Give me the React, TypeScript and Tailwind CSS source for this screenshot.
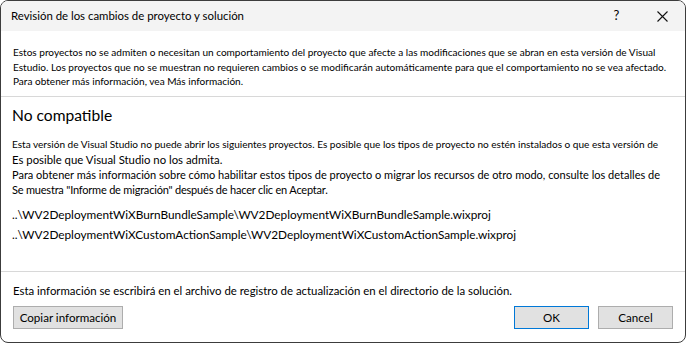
import React from "react";

const font = { fontFamily: 'Lato, "Noto Sans", sans-serif' };

export default function App() {
  return (
    <div className="w-[686px] h-[343px] bg-white" style={font}>
      <div className="w-[686px] h-[343px] border border-[#3c3c3c] rounded-[8px] overflow-hidden flex flex-col bg-white text-black">
        {/* Title bar */}
        <div className="h-[30px] bg-[#f3f3f3] flex items-center shrink-0">
          <div className="pl-[10px] text-[11.4px] whitespace-nowrap flex-1">Revisión de los cambios de proyecto y solución</div>
          <div className="w-[45px] flex justify-center text-[13px]">?</div>
          <div className="w-[46px] flex justify-center">
            <svg width="11" height="11" viewBox="0 0 11 11" stroke="#111" strokeWidth="1.1" fill="none">
              <path d="M0.5 0.5 L10.5 10.5 M10.5 0.5 L0.5 10.5" />
            </svg>
          </div>
        </div>
        {/* Description */}
        <div className="h-[66px] shrink-0 border-b border-[#d8d8d8] pl-[12px] pt-[14px] text-[10.05px] leading-[14.5px] whitespace-nowrap">
          <div>Estos proyectos no se admiten o necesitan un comportamiento del proyecto que afecte a las modificaciones que se abran en esta versión de Visual</div>
          <div>Estudio. Los proyectos que no se muestran no requieren cambios o se modificarán automáticamente para que el comportamiento no se vea afectado.</div>
          <div>Para obtener más información, vea Más información.</div>
        </div>
        {/* Main */}
        <div className="h-[175px] shrink-0 border-b border-[#d8d8d8] pl-[11px] pt-[8px] whitespace-nowrap">
          <div className="text-[15.6px] leading-[21px]">No compatible</div>
          <div className="mt-[11px] text-[10.05px] leading-[15px]">Esta versión de Visual Studio no puede abrir los siguientes proyectos. Es posible que los tipos de proyecto no estén instalados o que esta versión de</div>
          <div className="text-[11.35px] leading-[15px]">Es posible que Visual Studio no los admita.</div>
          <div className="text-[11px] leading-[15px]">Para obtener más información sobre cómo habilitar estos tipos de proyecto o migrar los recursos de otro modo, consulte los detalles de</div>
          <div className="text-[11px] leading-[15px] tracking-[-0.2px]">Se muestra "Informe de migración" después de hacer clic en Aceptar.</div>
          <div className="mt-[8px] text-[11.8px] leading-[20px]">..\WV2DeploymentWiXBurnBundleSample\WV2DeploymentWiXBurnBundleSample.wixproj</div>
          <div className="text-[11.8px] leading-[20px]">..\WV2DeploymentWiXCustomActionSample\WV2DeploymentWiXCustomActionSample.wixproj</div>
        </div>
        {/* Footer */}
        <div className="flex-1 pl-[12px] pr-[12px] pt-[11px]">
          <div className="text-[11.4px] leading-[16px] whitespace-nowrap">Esta información se escribirá en el archivo de registro de actualización en el directorio de la solución.</div>
          <div className="flex mt-[7px] items-center">
            <button className="h-[23px] w-[110px] bg-[#e1e1e1] border border-[#adadad] text-[11.6px] whitespace-nowrap flex items-center justify-center">Copiar información</button>
            <div className="flex-1" />
            <button className="h-[23px] w-[75px] bg-[#e1e1e1] border border-[#0078d7] text-[11.6px] flex items-center justify-center">OK</button>
            <button className="h-[23px] w-[75px] ml-[9px] bg-[#e1e1e1] border border-[#adadad] text-[11.6px] flex items-center justify-center">Cancel</button>
          </div>
        </div>
      </div>
    </div>
  );
}
